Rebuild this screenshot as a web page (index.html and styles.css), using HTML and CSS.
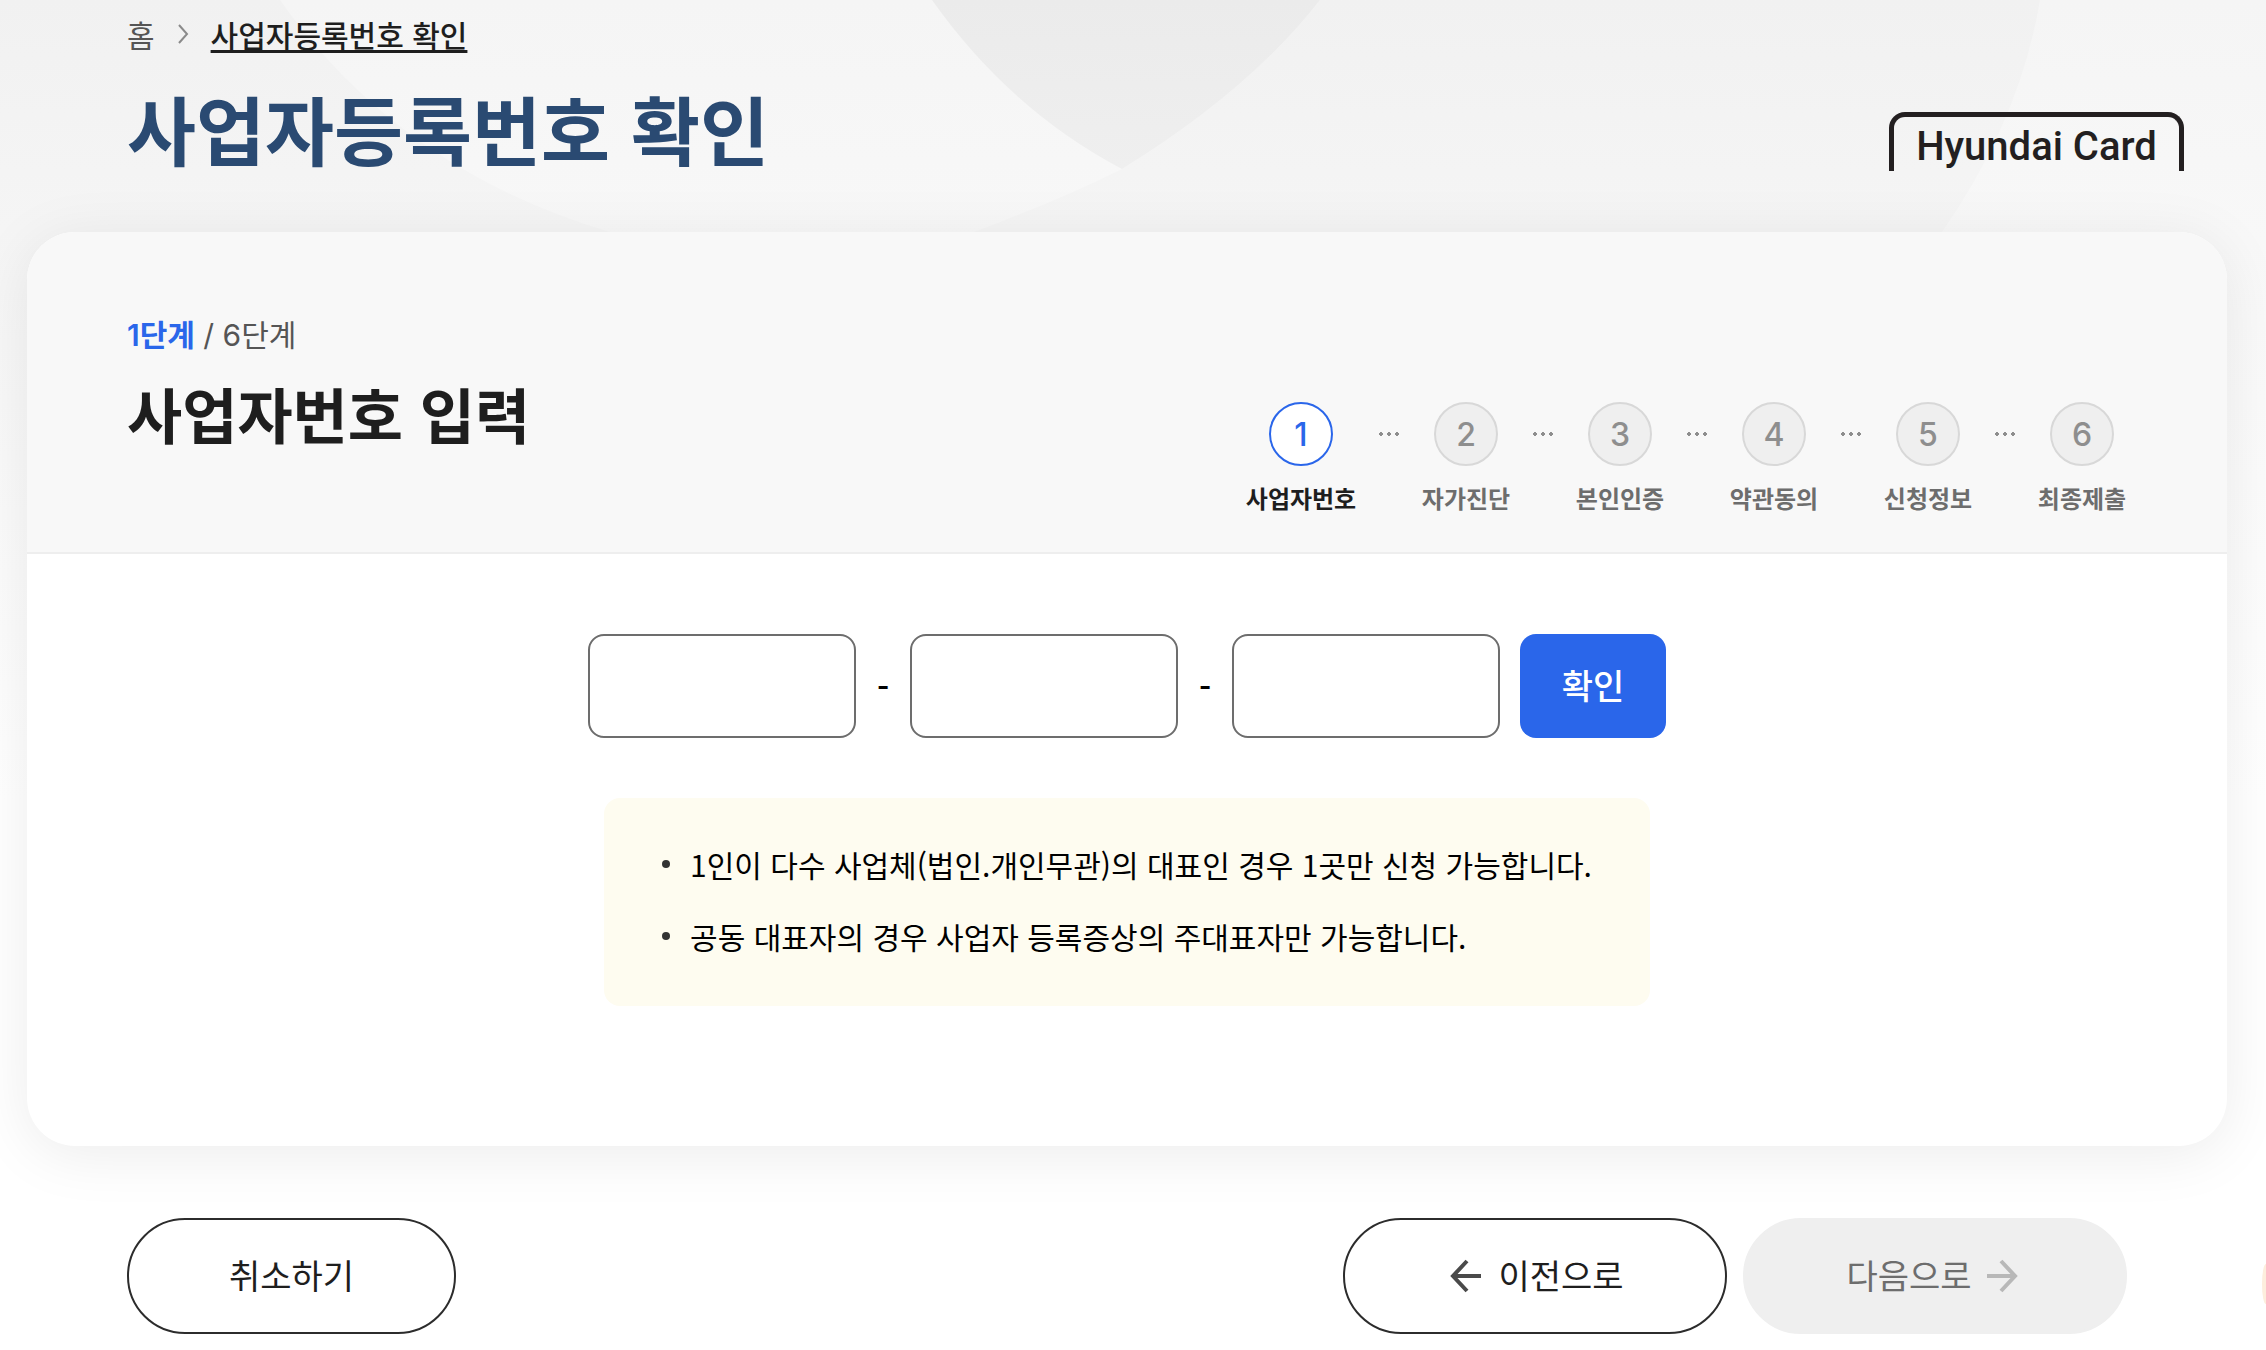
FILE: index.html
```html
<!DOCTYPE html>
<html lang="ko">
<head>
<meta charset="utf-8">
<meta name="viewport" content="width=device-width, initial-scale=1">
<title>사업자등록번호 확인</title>
<link rel="stylesheet" href="styles.css">
</head>
<body>
<svg class="backdrop" viewBox="0 0 2266 800" preserveAspectRatio="xMidYMin slice" aria-hidden="true">
  <defs>
    <linearGradient id="base" x1="0" y1="0" x2="0" y2="1">
      <stop offset="0" stop-color="#f1f1f1"/>
      <stop offset="1" stop-color="#ffffff"/>
    </linearGradient>
    <linearGradient id="light" gradientUnits="userSpaceOnUse" x1="0" y1="0" x2="0" y2="800">
      <stop offset="0" stop-color="#f5f5f5"/>
      <stop offset="1" stop-color="#ffffff"/>
    </linearGradient>
    <linearGradient id="overlap" gradientUnits="userSpaceOnUse" x1="0" y1="0" x2="0" y2="170">
      <stop offset="0" stop-color="#ebebeb"/>
      <stop offset="1" stop-color="#efefef"/>
    </linearGradient>
  </defs>
  <rect width="2266" height="800" fill="url(#base)"/>
  <path d="M280 0Q400 170 610 232H974Q1060 200 1122 169Q1250 90 1320 0Z" fill="url(#light)"/>
  <path d="M2040 0Q2020 120 1942 232V800H2266V0Z" fill="url(#light)"/>
  <path d="M932 0Q1010 110 1122 169Q1250 90 1320 0Z" fill="url(#overlap)"/>
</svg>
<div class="page">
  <header class="page-header">
    <div class="heading">
      <nav class="breadcrumb" aria-label="현재 위치">
        <a class="crumb" href="#">홈</a>
        <svg class="crumb-arrow" viewBox="0 0 12 28" aria-hidden="true"><path d="M2 5l8 9-8 9"/></svg>
        <a class="crumb crumb-current" href="#" aria-current="page">사업자등록번호 확인</a>
      </nav>
      <h1 class="page-title">사업자등록번호 확인</h1>
    </div>
    <div class="logo">Hyundai Card</div>
  </header>

  <main class="card">
    <div class="card-head">
      <div class="step-heading">
        <p class="step-count"><strong class="step-now">1단계</strong> / 6단계</p>
        <h2 class="step-title">사업자번호 입력</h2>
      </div>
      <ol class="steps">
        <li class="step step-active" aria-current="step"><span class="step-number">1</span><span class="step-label">사업자번호</span></li>
        <li class="step"><span class="step-number">2</span><span class="step-label">자가진단</span></li>
        <li class="step"><span class="step-number">3</span><span class="step-label">본인인증</span></li>
        <li class="step"><span class="step-number">4</span><span class="step-label">약관동의</span></li>
        <li class="step"><span class="step-number">5</span><span class="step-label">신청정보</span></li>
        <li class="step"><span class="step-number">6</span><span class="step-label">최종제출</span></li>
      </ol>
    </div>
    <div class="card-body">
      <form class="number-form">
        <input class="number-input" type="text" inputmode="numeric" maxlength="3" aria-label="사업자등록번호 앞 3자리">
        <span class="dash">-</span>
        <input class="number-input" type="text" inputmode="numeric" maxlength="2" aria-label="사업자등록번호 가운데 2자리">
        <span class="dash">-</span>
        <input class="number-input" type="text" inputmode="numeric" maxlength="5" aria-label="사업자등록번호 뒤 5자리">
        <button class="confirm" type="button">확인</button>
      </form>
      <ul class="notice">
        <li class="notice-item">1인이 다수 사업체(법인.개인무관)의 대표인 경우 1곳만 신청 가능합니다.</li>
        <li class="notice-item">공동 대표자의 경우 사업자 등록증상의 주대표자만 가능합니다.</li>
      </ul>
    </div>
  </main>

  <footer class="actions">
    <button class="action action-cancel" type="button">취소하기</button>
    <button class="action" type="button">
      <svg class="arrow" viewBox="0 0 40 40" aria-hidden="true"><path d="M35 22H7M21 7L7 22l14 15"/></svg>
      이전으로
    </button>
    <button class="action action-next" type="button" disabled>
      다음으로
      <svg class="arrow" viewBox="0 0 40 40" aria-hidden="true"><path d="M3 22h28M17 7l14 15-14 15"/></svg>
    </button>
  </footer>
</div>
<div class="floating" aria-hidden="true"></div>
</body>
</html>
```

FILE: styles.css
```css
* {
  box-sizing: border-box;
}

body {
  margin: 0;
  position: relative;
  min-height: 100vh;
  background: #fff;
  color: #1e1e1e;
  font-family: "Noto Sans CJK KR", sans-serif;
  font-size: 30px;
}

button,
input {
  font: inherit;
}

h1,
h2,
p,
ol,
ul {
  margin: 0;
  padding: 0;
}

.backdrop {
  position: absolute;
  z-index: -1;
  top: 0;
  left: 0;
  width: 100%;
  height: 800px;
}

.page {
  padding: 12px 39px 16px 27px;
}

.page-header {
  display: flex;
  justify-content: space-between;
  align-items: flex-end;
  height: 220px;
  padding: 0 43px 61px 100px;
}

.heading {
  align-self: flex-start;
}

.breadcrumb {
  display: flex;
  align-items: center;
  gap: 22px;
  line-height: 44px;
}

.crumb {
  color: #555;
  text-decoration: none;
}

.crumb-arrow {
  width: 12px;
  height: 28px;
  fill: none;
  stroke: #8a8a8a;
  stroke-width: 2;
}

.crumb-current {
  color: #1e1e1e;
  font-weight: 500;
  text-decoration: underline;
  text-decoration-thickness: 3px;
  text-underline-offset: 3px;
}

.page-title {
  margin-top: 16px;
  color: #2a4a72;
  font-size: 75px;
  font-weight: 700;
  line-height: 112px;
}

.logo {
  width: 295px;
  height: 59px;
  border: 5px solid #231f20;
  border-bottom: 0;
  border-radius: 16px 16px 0 0;
  color: #231f20;
  font-family: Roboto, sans-serif;
  font-size: 40px;
  font-weight: 500;
  line-height: 60px;
  text-align: center;
}

.card {
  border-radius: 48px;
  background: #fff;
  box-shadow: 0 8px 60px rgba(0, 0, 0, 0.08);
}

.card-head {
  display: flex;
  justify-content: space-between;
  align-items: flex-end;
  height: 322px;
  padding: 80px 100px 36px;
  border-bottom: 2px solid #eee;
  border-radius: 48px 48px 0 0;
  background: #f8f8f8;
}

.step-heading {
  align-self: flex-start;
}

.step-count {
  color: #555;
  font-family: Inter, "Noto Sans CJK KR", sans-serif;
  line-height: 46px;
}

.step-now {
  color: #2a66ea;
  font-weight: 600;
}

.step-title {
  margin-top: 10px;
  font-size: 60px;
  font-weight: 700;
  line-height: 90px;
}

.steps {
  display: flex;
  gap: 64px;
  list-style: none;
}

.step {
  position: relative;
  display: flex;
  flex-direction: column;
  align-items: center;
  gap: 14px;
  min-width: 90px;
  color: #6d6d6d;
}

.step + .step::before {
  content: "";
  position: absolute;
  top: 30px;
  left: -44px;
  width: 24px;
  height: 4px;
  background: radial-gradient(circle, #8e8e8e 2px, transparent 2px) 0 0 / 8px 4px;
}

.step-number {
  display: flex;
  justify-content: center;
  align-items: center;
  width: 64px;
  height: 64px;
  padding-top: 2px;
  border: 2px solid #d8d8d8;
  border-radius: 50%;
  background: #efefef;
  color: #8e8e8e;
  font-family: Inter, sans-serif;
  font-size: 32px;
  font-weight: 500;
  line-height: 40px;
}

.step-label {
  font-size: 24px;
  font-weight: 700;
  line-height: 36px;
}

.step-active {
  min-width: 112px;
  color: #1e1e1e;
}

.step-active .step-number {
  border-color: #2a66ea;
  background: #fff;
  color: #2a66ea;
}

.card-body {
  display: flex;
  flex-direction: column;
  align-items: center;
  gap: 60px;
  padding: 80px 100px 140px;
}

.number-form {
  display: flex;
  align-items: center;
}

.number-input {
  width: 268px;
  height: 104px;
  padding: 0 30px;
  border: 2px solid #6d6d6d;
  border-radius: 16px;
  background: #fff;
}

.dash {
  width: 54px;
  padding-bottom: 2px;
  color: #000;
  font-size: 34px;
  font-weight: 500;
  text-align: center;
}

.confirm {
  width: 146px;
  height: 104px;
  margin-left: 20px;
  padding: 0 0 4px;
  border: 0;
  border-radius: 16px;
  background: #2a66ea;
  color: #fff;
  font-size: 34px;
  font-weight: 500;
}

.notice {
  padding: 42px 58px 46px;
  border-radius: 16px;
  background: #fefcf0;
  color: #000;
  list-style: none;
}

.notice-item {
  display: flex;
  align-items: center;
  gap: 20px;
  line-height: 48px;
}

.notice-item + .notice-item {
  margin-top: 24px;
}

.notice-item::before {
  content: "";
  width: 8px;
  height: 8px;
  border-radius: 50%;
  background: #333;
}

.actions {
  display: flex;
  gap: 16px;
  padding: 72px 100px 0;
}

.action {
  display: flex;
  justify-content: center;
  align-items: center;
  gap: 12px;
  width: 384px;
  height: 116px;
  padding: 0 0 4px;
  border: 2px solid #2c2c2c;
  border-radius: 58px;
  background: #fff;
  color: #1e1e1e;
  font-size: 34px;
}

.action-cancel {
  width: 329px;
  margin-right: auto;
}

.action-next {
  border-color: #efefef;
  background: #efefef;
  color: #6d6d6d;
}

.arrow {
  width: 40px;
  height: 40px;
  fill: none;
  stroke: #4a4a4a;
  stroke-width: 4;
}

.action-next .arrow {
  stroke: #b8b8b8;
}

.floating {
  position: absolute;
  top: 1264px;
  right: 0;
  width: 4px;
  height: 40px;
  border-radius: 4px 0 0 4px / 20px 0 0 20px;
  background: #fdeedd;
}
```
